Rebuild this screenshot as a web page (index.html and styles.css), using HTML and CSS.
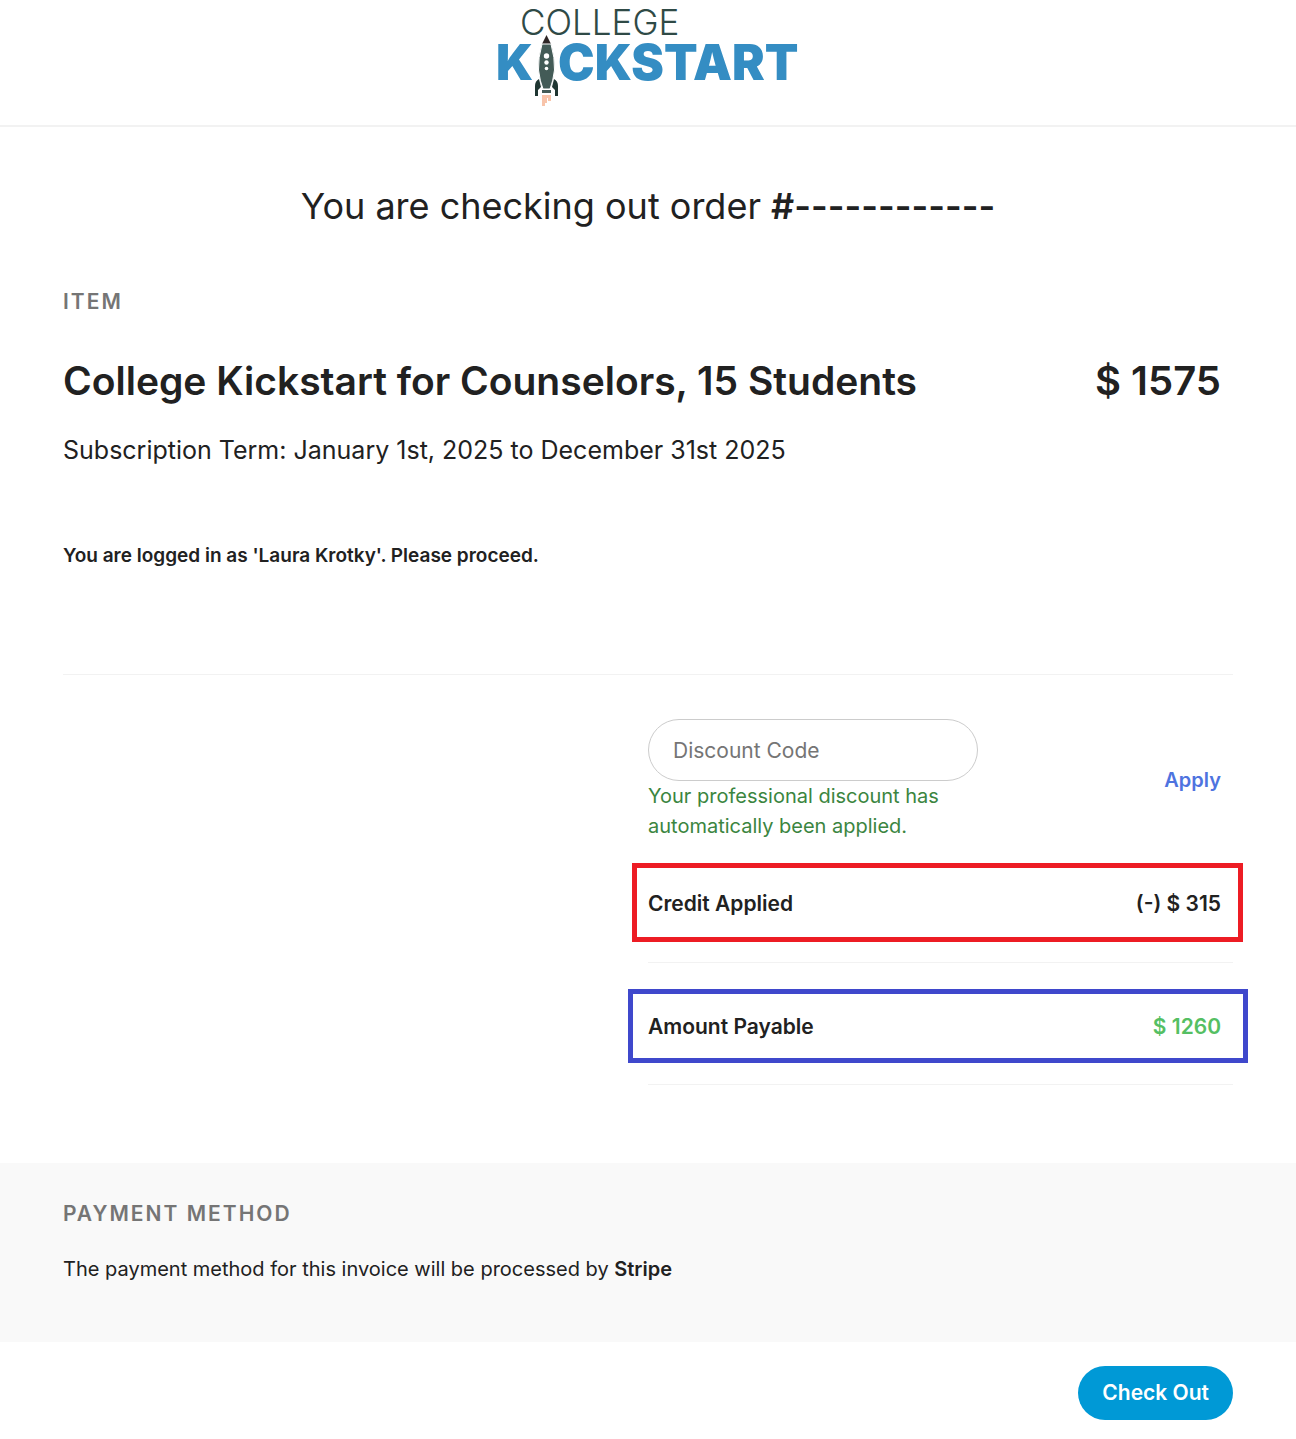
FILE: index.html
```html
<!DOCTYPE html>
<html lang="en">

<head>
    <meta charset="UTF-8">
    <title>College Kickstart - Checkout</title>
    <meta name="viewport" content="width=device-width,initial-scale=1">
    <link rel="stylesheet" href="styles.css">
</head>

<body>
    <header class="site-header">
        <a href="#" class="logo" aria-label="College Kickstart">
            <svg width="300" height="96" viewBox="0 0 300 96">
                <text class="logo-top" x="22" y="25">COLLEGE</text>
                <text class="logo-main" x="-2" y="70">K</text>
                <text class="logo-main" x="60" y="70">CKSTART</text>
                <!-- rocket -->
                <path fill="#2e2626" d="M48.500 25 L53 34 H44 Z" />
                <path fill="#435b57" stroke="#fff" d="M44 34 H53 Q57 48 56.500 60 Q55 72 52 79 H45 Q42 72 40.500 60 Q40 48 44 34 Z" />
                <path fill="#1f3632" d="M41 69 L43 77 L40 80 V86 H37 V76 Q37 71 41 69 Z M56 69 L54 77 L57 80 V86 H60 V76 Q60 71 56 69 Z" />
                <rect x="44" y="80" width="9" height="3" fill="#435b57" />
                <circle cx="48.500" cy="46" r="2.700" fill="#fff" />
                <circle cx="48.500" cy="52.500" r="2.200" fill="#fff" />
                <circle cx="48.500" cy="58.500" r="1.800" fill="#fff" />
                <path fill="#f8c4aa" d="M44 85 H53 V91 H50 V88 H49 V93 H47 V96 H44 Z" />
            </svg>
        </a>
    </header>

    <main>
        <h1>You are checking out order <b>#------------</b></h1>

        <section class="order">
            <h2 class="label">ITEM</h2>
            <div class="item">
                <h3>College Kickstart for Counselors, 15 Students</h3>
                <span class="price">$ 1575</span>
            </div>
            <p class="term">Subscription Term: January 1st, 2025 to December 31st 2025</p>
            <p class="logged-in">You are logged in as 'Laura Krotky'. Please proceed.</p>

            <div class="summary">
                <form class="discount">
                    <div class="discount-field">
                        <input type="text" placeholder="Discount Code" aria-label="Discount Code">
                        <p>Your professional discount has automatically been applied.</p>
                    </div>
                    <button type="button" class="apply">Apply</button>
                </form>
                <div class="total">
                    <div class="box credit">
                        <span>Credit Applied</span>
                        <span>(-) $ 315</span>
                    </div>
                </div>
                <div class="total">
                    <div class="box payable">
                        <span>Amount Payable</span>
                        <span class="amount">$ 1260</span>
                    </div>
                </div>
            </div>
        </section>

        <section class="payment">
            <h2 class="label">PAYMENT METHOD</h2>
            <p>The payment method for this invoice will be processed by <b>Stripe</b></p>
        </section>

        <div class="actions">
            <button type="button" class="checkout">Check Out</button>
        </div>
    </main>
</body>

</html>
```
FILE: styles.css
```css
* {
    box-sizing: border-box;
}

body {
    margin: 0;
    font-family: Inter, "Liberation Sans", sans-serif;
    font-size: 20px;
    line-height: 30px;
    color: #212121;
    background: #fff;
}

h1, h2, h3, p {
    margin: 0;
}

b {
    font-weight: 600;
}

input, button {
    font-family: inherit;
}

button {
    border: none;
    cursor: pointer;
}

/* header */
.site-header {
    display: flex;
    justify-content: center;
    padding: 10px 0 19px;
    border-bottom: 2px solid #f2f2f2;
}

.logo,
.logo svg {
    display: block;
}

.logo svg {
    overflow: visible;
}

.logo-top {
    font-weight: 300;
    font-size: 35px;
    fill: #2f4a46;
}

.logo-main {
    font-weight: 900;
    font-size: 49px;
    fill: #348dc3;
}

/* order */
h1 {
    padding: 55px 20px 0;
    font-size: 36px;
    font-weight: 400;
    line-height: 48px;
    text-align: center;
}

.order {
    padding: 57px 63px 78px;
}

.label {
    font-size: 21px;
    font-weight: 600;
    line-height: 30px;
    letter-spacing: 2px;
    color: #757575;
}

.item {
    display: flex;
    justify-content: space-between;
    padding: 39px 12px 0 0;
    font-size: 40px;
    font-weight: 600;
    line-height: 50px;
}

.item h3 {
    font-size: 39px;
    font-weight: inherit;
}

.term {
    margin-top: 29px;
    font-size: 25px;
}

.logged-in {
    padding: 76px 0 103px;
    font-size: 19px;
    font-weight: 600;
    border-bottom: 1px solid #f2f2f2;
}

.summary {
    width: 50%;
    margin-left: auto;
    padding-top: 44px;
}

.discount {
    display: flex;
    justify-content: space-between;
    align-items: center;
    padding-right: 12px;
}

.discount-field {
    width: 330px;
}

.discount input {
    display: block;
    width: 100%;
    height: 62px;
    padding: 0 24px;
    font-size: 21px;
    border: 1px solid #ccc;
    border-radius: 31px;
}

.discount input::placeholder {
    color: #757575;
}

.discount p {
    color: #3b8540;
}

.apply {
    padding: 0;
    font-size: 20px;
    font-weight: 600;
    color: #4e73df;
    background: none;
}

.total {
    padding: 22px 0 20px;
    border-bottom: 1px solid #f2f2f2;
}

.total + .total {
    padding: 26px 0 21px;
}

.box {
    display: flex;
    justify-content: space-between;
    align-items: center;
    font-size: 21px;
    font-weight: 600;
}

.credit {
    margin: 0 -10px 0 -16px;
    padding: 21px 17px 18px 11px;
    border: 5px solid #ed1c24;
}

.payable {
    margin: 0 -15px 0 -20px;
    padding: 18px 22px 16px 15px;
    border: 5px solid #3f48cc;
}

.amount {
    color: #55bf63;
}

/* payment */
.payment {
    padding: 36px 63px 58px;
    background: #f9f9f9;
}

.payment p {
    margin-top: 25px;
}

.actions {
    display: flex;
    justify-content: flex-end;
    padding: 24px 63px 19px;
}

.checkout {
    padding: 12px 24px;
    font-size: 21px;
    font-weight: 600;
    line-height: 30px;
    color: #fff;
    background: #0099d6;
    border-radius: 27px;
}
```
